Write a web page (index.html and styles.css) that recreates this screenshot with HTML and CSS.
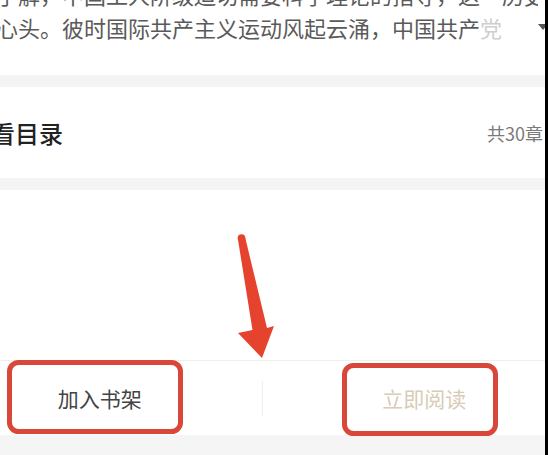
FILE: index.html
```html
<!DOCTYPE html>
<html>

<head>
    <meta charset="utf-8" />
    <title>书籍详情</title>
    <link rel="stylesheet" href="styles.css">
</head>

<body>
    <div class="page">
        <section class="intro">
            <p class="introText">了解，中国工人阶级迫切需要科学理论的指导，这一历史重任落在先进分子<br>心头。彼时国际共产主义运动风起云涌，中国共产<span class="fade">党</span></p>
            <svg class="more" width="10" height="6" viewBox="0 0 10 6"><path d="M0 0 L10 0 L5 6 Z" fill="#555"/></svg>
        </section>
        <div class="gap"></div>
        <section class="catalog">
            <span class="catalogTitle">看目录</span>
            <span class="catalogCount">共30章</span>
        </section>
        <div class="gap"></div>
        <div class="blank"></div>
        <footer class="actions">
            <button class="action addShelf">加入书架</button>
            <span class="divider"></span>
            <button class="action readNow">立即阅读</button>
        </footer>
    </div>

    <!-- annotation marks drawn over the screenshot -->
    <svg class="marks" width="548" height="455" viewBox="0 0 548 455">
        <rect x="9.5" y="362.5" width="171" height="69" rx="9" fill="none" stroke="#d9463a" stroke-width="5"/>
        <rect x="344.5" y="365.5" width="151" height="68" rx="9" fill="none" stroke="#d9463a" stroke-width="5"/>
        <circle cx="241.5" cy="238" r="3.8" fill="#e6432f"/>
        <polygon points="237.8,238.5 245.2,237.5 267,328 274,326 262,358 238,333 252.5,330" fill="#e6432f"/>
    </svg>
    <div class="edge"></div>
</body>

</html>
```

FILE: styles.css
```css
html,
body {
    margin: 0;
    height: 100%;
    overflow: hidden;
}

body {
    font-family: "Noto Sans CJK SC", "Noto Sans", sans-serif;
    background: #f5f5f5;
    position: relative;
}

.page {
    width: 548px;
}

.intro {
    display: flex;
    height: 75px;
    overflow: hidden;
    background: #fff;
}

.introText {
    flex: 1;
    margin: -22px 0 0 -4px;
    font-size: 22px;
    line-height: 33px;
    color: #5a5a5a;
    white-space: nowrap;
    overflow: hidden;
}

.fade {
    color: #cfcfcf;
}

.more {
    flex: none;
    margin: 24px 0 0 0;
}

.gap {
    height: 12px;
    background: #f4f4f4;
}

.catalog {
    display: flex;
    align-items: center;
    justify-content: space-between;
    height: 91px;
    padding-right: 5px;
    background: #fff;
}

.catalogTitle {
    margin-left: -9px;
    font-size: 24px;
    font-weight: 500;
    color: #222;
}

.catalogCount {
    font-size: 18px;
    color: #7a7a7a;
}

.blank {
    height: 170px;
    background: #fff;
}

.actions {
    display: flex;
    align-items: center;
    width: 648px;
    height: 74px;
    margin-left: -62px;
    border-top: 1px solid #efefef;
    background: #fff;
}

.action {
    flex: 1;
    height: 100%;
    padding: 0;
    border: none;
    background: none;
    font-family: inherit;
    font-size: 21px;
}

.addShelf {
    color: #444;
}

.readNow {
    color: #d8ccb6;
}

.divider {
    width: 1px;
    height: 35px;
    background: #eee;
}

.marks {
    position: absolute;
    top: 0;
    left: 0;
    pointer-events: none;
}

.edge {
    position: absolute;
    top: 0;
    right: 0;
    width: 3px;
    height: 100%;
    background: #000;
}
```
